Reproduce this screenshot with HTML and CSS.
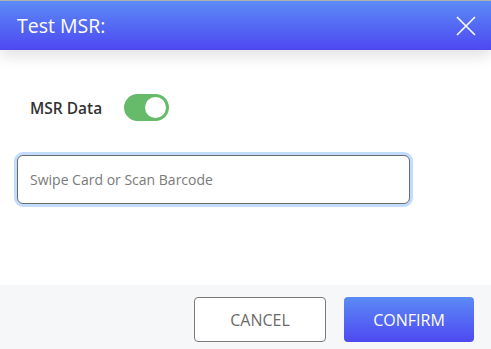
FILE: index.html
```html
<!DOCTYPE html>
<html>
<head>
<meta charset="utf-8">
<link rel="stylesheet" href="styles.css">
</head>
<body>
<div class="dialog">
  <header class="header">
    <h1 class="title">Test MSR:</h1>
    <button class="close" aria-label="Close">
      <svg width="20" height="20" viewBox="0 0 20 20"><path d="M1 1L19 19M19 1L1 19" stroke="#fff" stroke-width="1.6" fill="none"/></svg>
    </button>
  </header>
  <main class="content">
    <div class="row">
      <span class="label">MSR Data</span>
      <span class="toggle"><span class="knob"></span></span>
    </div>
    <div class="field">
      <input class="input" type="text" placeholder="Swipe Card or Scan Barcode">
    </div>
  </main>
  <footer class="footer">
    <button class="btn btn-cancel">CANCEL</button>
    <button class="btn btn-confirm">CONFIRM</button>
  </footer>
</div>
</body>
</html>
```
FILE: styles.css
```css
* { box-sizing: border-box; }
html, body { margin: 0; padding: 0; background: #fff; }
body { font-family: "Open Sans", "Noto Sans", sans-serif; width: 491px; height: 349px; overflow: hidden; }
.dialog { display: flex; flex-direction: column; height: 349px; border-top: 1px solid #b4b4b8; }
.header {
  height: 49px;
  background: linear-gradient(180deg, #5b8bf6 0%, #4e48f1 100%);
  display: flex; align-items: center; justify-content: space-between;
  padding: 0 15px 0 17px;
  box-shadow: 0 6px 14px rgba(0,0,0,0.12);
  position: relative; z-index: 1;
}
.title { margin: 0; font-size: 19.5px; font-weight: 400; color: #fff; letter-spacing: 0; }
.close { background: none; border: 0; padding: 0; width: 20px; height: 20px; display: flex; }
.content { flex: 1; padding: 44px 0 0 17px; }
.row { display: flex; align-items: center; padding-left: 13px; height: 27px; }
.label { font-size: 15.5px; font-weight: 600; color: #333; width: 94px; }
.toggle { width: 45px; height: 27px; border-radius: 14px; background: #66bb6a; position: relative; display: inline-block; }
.knob { position: absolute; right: 3px; top: 3px; width: 21px; height: 21px; border-radius: 50%; background: #fff; }
.field { margin-top: 34px; width: 393px; }
.input {
  width: 393px; height: 49px;
  border: 1px solid #6b6b6b; border-radius: 6px;
  box-shadow: 0 0 0 3px #c3dbfc;
  padding: 0 12px; font-family: inherit; font-size: 14px; color: #333; outline: none;
}
.input::placeholder { color: #7a7a7a; }
.footer { height: 64px; background: #f6f7f9; display: flex; justify-content: flex-end; gap: 18px; padding: 12px 17px 0 0; }
.btn { height: 45px; border-radius: 4px; font-family: inherit; font-size: 16px; font-weight: 400; cursor: pointer; }
.btn-cancel { width: 132px; background: #fff; border: 1px solid #7a7a7a; color: #6a6a6a; }
.btn-confirm { width: 130px; border: 0; color: #fff; background: linear-gradient(180deg, #5b8bf6 0%, #4e48f1 100%); }
```
